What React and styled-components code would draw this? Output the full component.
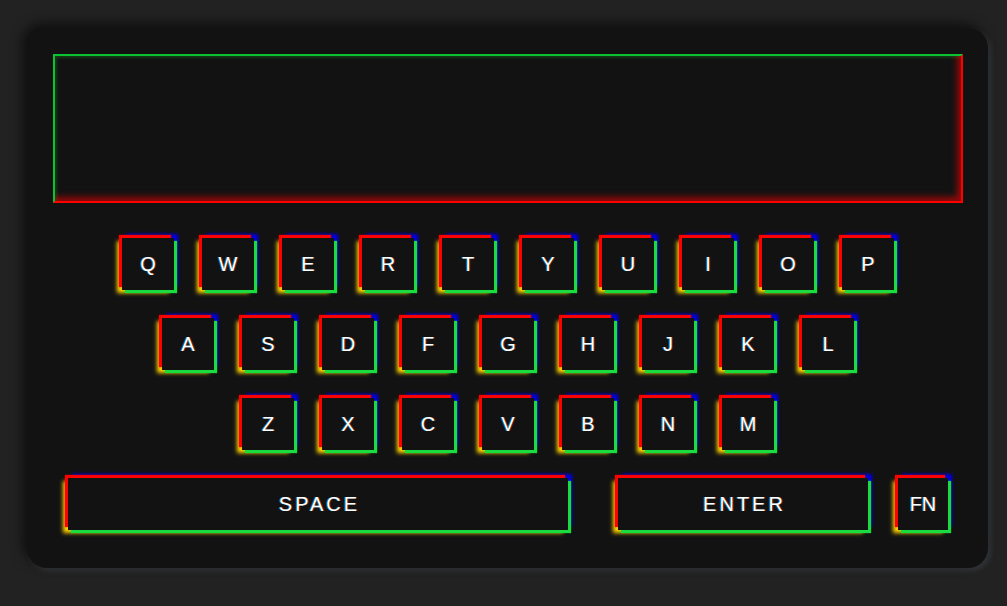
import React from "react";
import styled, { createGlobalStyle } from "styled-components";

const Global = createGlobalStyle`
  html, body { margin: 0; padding: 0; background: #222222; }
  body { font-family: "Liberation Sans", Arial, sans-serif; }
`;

const Page = styled.div`
  width: 1007px;
  height: 606px;
  padding: 28px 0 0 27px;
  box-sizing: border-box;
  background: #222222;
`;

const Device = styled.div`
  width: 961px;
  height: 540px;
  box-sizing: border-box;
  padding: 26px 25px 0 26px;
  background: #121212;
  border-radius: 20px;
  box-shadow: -5px -5px 12px rgba(0, 0, 0, 0.55), 3px 3px 5px rgba(62, 68, 74, 0.55);
  display: flex;
  flex-direction: column;
`;

const Screen = styled.div`
  height: 149px;
  box-sizing: border-box;
  border: 2px solid;
  border-color: #0bc232 #ff0000 #ff0000 #0bc232;
  background: #121212;
  box-shadow: inset -4px -4px 6px rgba(255, 0, 0, 0.55), inset 2px 2px 3px rgba(0, 190, 50, 0.25);
`;

const Keyboard = styled.div`
  margin-top: 35px;
  display: flex;
  flex-direction: column;
  gap: 28px;
  align-items: center;
`;

const Row = styled.div`
  display: flex;
  justify-content: center;
  gap: ${(p) => p.$gap ?? 28}px;
`;

const Key = styled.div`
  width: ${(p) => p.$w || 52}px;
  height: 52px;
  box-sizing: border-box;
  background: #121212;
  display: flex;
  align-items: center;
  justify-content: center;
  color: #ffffff;
  font-family: "Liberation Sans", Arial, sans-serif;
  font-size: 20px;
  letter-spacing: ${(p) => p.$ls || 0}px;
  text-indent: ${(p) => p.$ls || 0}px;
  text-shadow: -1px 0 rgba(0, 190, 255, 0.5), 1px 0 rgba(255, 60, 0, 0.4);
  box-shadow:
    -3px -3px 1px #ff0000,
    3px 3px 1px #1bdc3e,
    4px -4px 3px #0000e0,
    -5px 3px 4px #ffd200;
`;

const rows = [
  ["Q", "W", "E", "R", "T", "Y", "U", "I", "O", "P"],
  ["A", "S", "D", "F", "G", "H", "J", "K", "L"],
  ["Z", "X", "C", "V", "B", "N", "M"],
];

export default function App() {
  return (
    <Page>
      <Global />
      <Device>
        <Screen />
        <Keyboard>
          {rows.map((r, i) => (
            <Row key={i}>
              {r.map((k) => (
                <Key key={k}>{k}</Key>
              ))}
            </Row>
          ))}
          <Row $gap={0}>
            <Key $w={500} $ls={3}>SPACE</Key>
            <Key $w={250} $ls={3} style={{ marginLeft: 50 }}>ENTER</Key>
            <Key $w={50} style={{ marginLeft: 30 }}>FN</Key>
          </Row>
        </Keyboard>
      </Device>
    </Page>
  );
}
